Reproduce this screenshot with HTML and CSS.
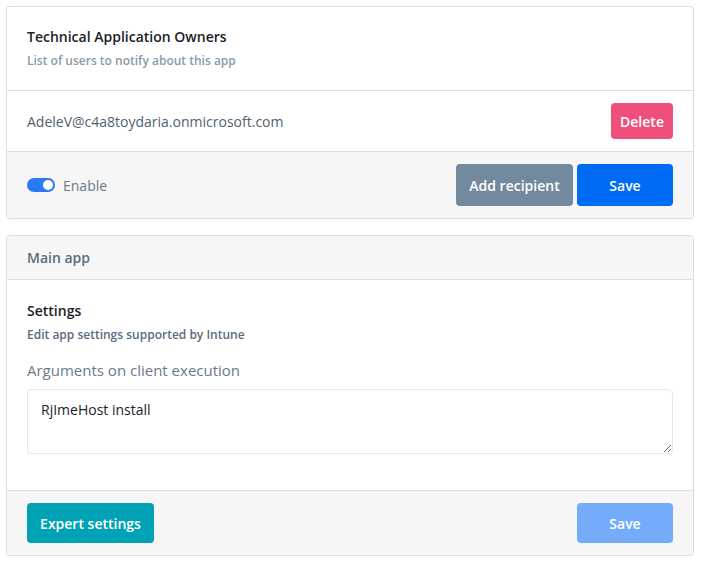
FILE: index.html
```html
<!DOCTYPE html>
<html>
<head>
<meta charset="utf-8">
<link rel="stylesheet" href="styles.css">
</head>
<body>
<div class="page">
  <section class="card">
    <div class="card-head">
      <h2 class="title">Technical Application Owners</h2>
      <p class="subtitle light">List of users to notify about this app</p>
    </div>
    <div class="row">
      <span class="email">AdeleV@c4a8toydaria.onmicrosoft.com</span>
      <button class="btn btn-delete">Delete</button>
    </div>
    <div class="footer">
      <label class="toggle-wrap">
        <span class="toggle"><span class="knob"></span></span>
        <span class="toggle-label">Enable</span>
      </label>
      <div class="actions">
        <button class="btn btn-gray">Add recipient</button>
        <button class="btn btn-primary">Save</button>
      </div>
    </div>
  </section>

  <section class="card">
    <div class="card-bar">Main app</div>
    <div class="card-body">
      <h2 class="title">Settings</h2>
      <p class="subtitle dark">Edit app settings supported by Intune</p>
      <label class="field-label">Arguments on client execution</label>
      <textarea class="textarea">RjImeHost install</textarea>
    </div>
    <div class="footer footer-2">
      <button class="btn btn-teal">Expert settings</button>
      <button class="btn btn-primary btn-disabled">Save</button>
    </div>
  </section>
</div>
</body>
</html>
```

FILE: styles.css
```css
* { box-sizing: border-box; }
html, body { margin: 0; padding: 0; background: #fff; }
body {
  font-family: "Open Sans", "Noto Sans", sans-serif;
  color: #1f2933;
}
.page {
  width: 688px;
  margin: 6px 0 0 6px;
  display: flex;
  flex-direction: column;
  gap: 16px;
}
.card {
  border: 1px solid #dedede;
  border-radius: 4px;
  background: #fff;
  overflow: hidden;
  box-shadow: 0 1px 3px rgba(0,0,0,0.03);
}
.card-head {
  padding: 20px 20px 20px;
  border-bottom: 1px solid #dedede;
}
.title {
  margin: 0;
  font-size: 14px;
  line-height: 20px;
  font-weight: 600;
  color: #1b2128;
}
.subtitle {
  margin: 5px 0 0;
  font-size: 12px;
  line-height: 18px;
  font-weight: 600;
}
.subtitle.light { color: #8c9aa8; }
.subtitle.dark { color: #5b6c7d; }
.row {
  display: flex;
  align-items: center;
  justify-content: space-between;
  padding: 12px 20px;
  border-bottom: 1px solid #dedede;
}
.email {
  font-size: 14px;
  color: #4f5f70;
}
.footer {
  background: #f6f6f6;
  padding: 12px 20px;
  display: flex;
  align-items: center;
  justify-content: space-between;
}
.toggle-wrap {
  display: flex;
  align-items: center;
  gap: 8px;
}
.toggle {
  width: 28px;
  height: 14px;
  border-radius: 7px;
  background: #2a7af5;
  position: relative;
  display: inline-block;
}
.knob {
  position: absolute;
  right: 2px;
  top: 2px;
  width: 10px;
  height: 10px;
  border-radius: 50%;
  background: #fff;
}
.toggle-label {
  font-size: 14px;
  color: #6b7a89;
}
.actions {
  display: flex;
  gap: 4px;
}
.btn {
  font-family: "Open Sans", "Noto Sans", sans-serif;
  font-size: 14px;
  font-weight: 600;
  color: #fff;
  border: none;
  border-radius: 4px;
  cursor: pointer;
}
.btn-delete {
  background: #ef4f7b;
  height: 36px;
  width: 62px;
  padding: 0;
}
.btn-gray {
  background: #738a9e;
  height: 42px;
  width: 117px;
  padding: 0;
}
.btn-primary {
  background: #006bf4;
  height: 42px;
  width: 96px;
  padding: 0;
}
.card-bar {
  background: #f6f6f6;
  padding: 12px 20px 11px;
  font-size: 14px;
  line-height: 20px;
  font-weight: 600;
  color: #5d6c7b;
  border-bottom: 1px solid #dedede;
}
.card-body {
  padding: 21px 20px 36px;
  display: flex;
  flex-direction: column;
}
.field-label {
  margin-top: 15px;
  font-size: 15px;
  line-height: 22px;
  color: #6c7a89;
}
.textarea {
  margin-top: 8px;
  height: 65px;
  width: 100%;
  border: 1px solid #e4e6ea;
  border-radius: 4px;
  padding: 10px 13px;
  font-family: "Open Sans", "Noto Sans", sans-serif;
  font-size: 14px;
  line-height: 20px;
  color: #1b2128;
  resize: vertical;
}
.footer-2 {
  border-top: 1px solid #dedede;
}
.footer-2 .btn { height: 40px; }
.btn-teal {
  background: #00a3b6;
  width: 127px;
  padding: 0;
}
.btn-disabled {
  background: #74acf9;
}
```
